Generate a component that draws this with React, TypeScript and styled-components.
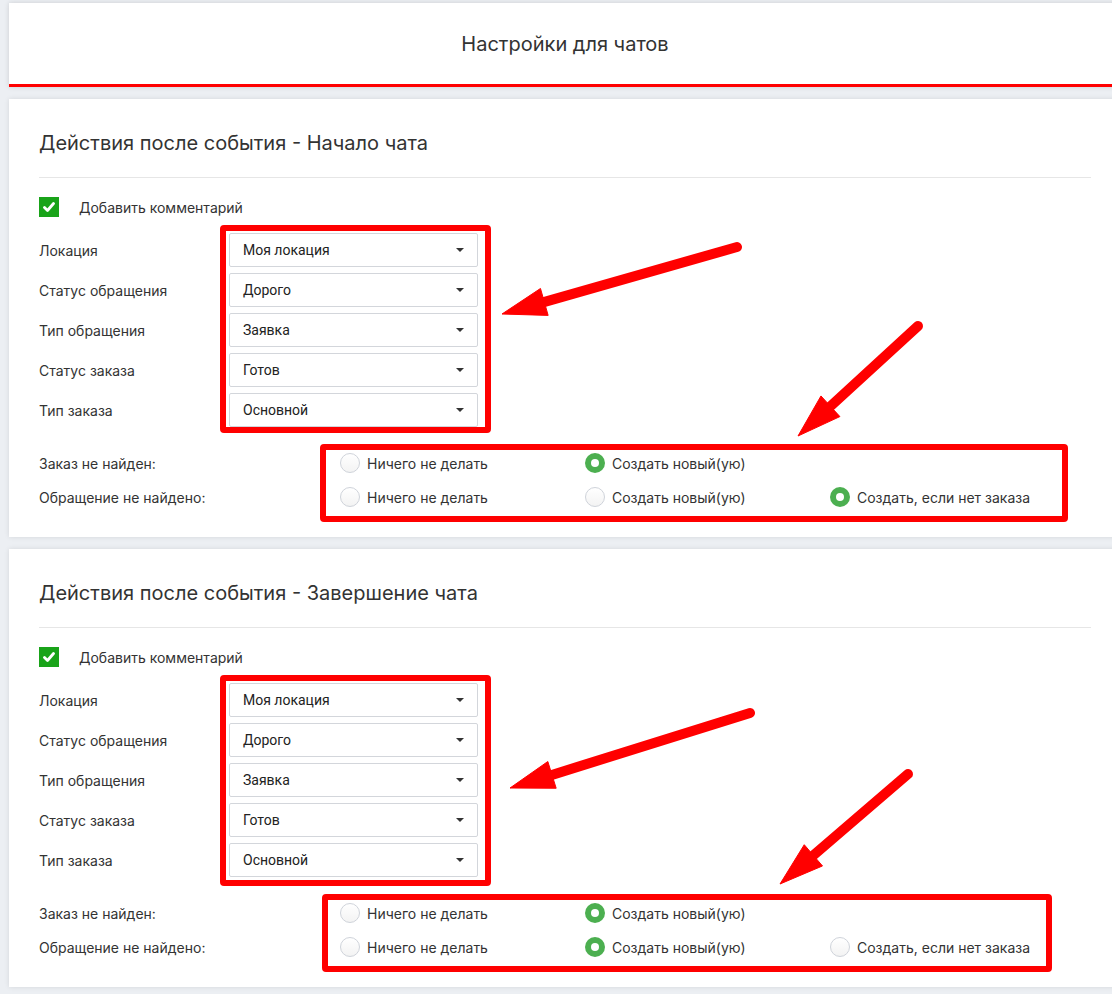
import React from "react";
import styled, { createGlobalStyle } from "styled-components";

const GlobalStyle = createGlobalStyle`
  body {
    margin: 0;
    background: #eceff3;
    font-family: Inter, "Noto Sans", sans-serif;
    color: #333;
    overflow-x: hidden;
  }
`;

const Page = styled.div`
  display: flex;
  flex-direction: column;
  gap: 12px;
  padding: 3px 0 5px 9px;
`;

const HeaderCard = styled.header`
  width: 1112px;
  height: 81px;
  background: #fff;
  border-bottom: 3px solid #ff0000;
  box-shadow: 0 0 5px rgba(0, 0, 0, 0.14);
  display: flex;
  align-items: center;
  justify-content: center;
  font-size: 20px;
  color: #333;
`;

const Card = styled.section`
  position: relative;
  width: 1112px;
  box-sizing: border-box;
  background: #fff;
  padding: 32px 30px 15px;
  box-shadow: 0 0 5px rgba(0, 0, 0, 0.1);
`;

const Title = styled.h2`
  margin: 0;
  font-size: 20px;
  font-weight: 400;
  line-height: 24px;
  padding-bottom: 22px;
  border-bottom: 1px solid #e6e6e6;
  color: #333;
`;

const CheckRow = styled.div`
  margin-top: 19px;
  display: flex;
  align-items: center;
  gap: 20px;
  height: 20px;
  font-size: 14px;
`;

const CheckBox = styled.span`
  width: 20px;
  height: 20px;
  background: #19a319;
  display: flex;
  align-items: center;
  justify-content: center;
`;

const Fields = styled.div`
  margin-top: 8px;
  display: flex;
`;

const LabelCol = styled.div<{ $width: number; $top: number; $gap: number; $row: number }>`
  width: ${(p) => p.$width}px;
  flex-shrink: 0;
  padding-top: ${(p) => p.$top}px;
  display: flex;
  flex-direction: column;
  gap: ${(p) => p.$gap}px;

  & > div {
    height: ${(p) => p.$row}px;
    display: flex;
    align-items: center;
    font-size: 14px;
  }
`;

const SelectBox = styled.div<{ $extra: number }>`
  border: 6px solid #ff0000;
  border-radius: 4px;
  padding: 2px 7px ${(p) => p.$extra}px 3px;
  display: flex;
  flex-direction: column;
  gap: 6px;
  width: 249px;
`;

const Select = styled.div`
  height: 34px;
  box-sizing: border-box;
  border: 1px solid #d3d6db;
  border-radius: 2px;
  padding: 0 13px;
  display: flex;
  align-items: center;
  justify-content: space-between;
  font-family: Roboto, "Noto Sans", sans-serif;
  font-size: 14px;
  color: #222;
  background: #fff;
`;

const Caret = styled.span`
  width: 0;
  height: 0;
  border-left: 4px solid transparent;
  border-right: 4px solid transparent;
  border-top: 4px solid #333;
`;

const RadioArea = styled.div<{ $top: number }>`
  margin-top: ${(p) => p.$top}px;
  display: flex;
`;

const RadioBox = styled.div<{ $width: number; $shift: number }>`
  margin-left: ${(p) => p.$shift}px;
  width: ${(p) => p.$width}px;
  box-sizing: border-box;
  border: 6px solid #ff0000;
  border-radius: 4px;
  padding: 0 0 6px ${(p) => 14 - p.$shift}px;
  display: flex;
  flex-direction: column;
  gap: 8px;
`;

const RadioRow = styled.div`
  height: 26px;
  display: flex;
  align-items: center;
`;

const Option = styled.label`
  width: 245px;
  flex-shrink: 0;
  display: flex;
  align-items: center;
  gap: 7px;
  font-size: 14px;
  color: #333;
  white-space: nowrap;
`;

const Radio = styled.span<{ $on: boolean }>`
  position: relative;
  flex-shrink: 0;
  width: 20px;
  height: 20px;
  box-sizing: border-box;
  border-radius: 50%;
  border: ${(p) => (p.$on ? "none" : "1px solid #cfd3da")};
  background: ${(p) => (p.$on ? "#4caf50" : "linear-gradient(#fff, #f3f3f3)")};

  &::after {
    content: "";
    display: ${(p) => (p.$on ? "block" : "none")};
    position: absolute;
    left: 6px;
    top: 6px;
    width: 8px;
    height: 8px;
    border-radius: 50%;
    background: #fff;
  }
`;

const Overlay = styled.svg`
  position: absolute;
  left: 0;
  top: 0;
  width: 100%;
  height: 100%;
  pointer-events: none;
  overflow: visible;
`;

type Pt = [number, number];

const Arrow = ({ from, to }: { from: Pt; to: Pt }) => {
  const dx = to[0] - from[0];
  const dy = to[1] - from[1];
  const len = Math.hypot(dx, dy);
  const ux = dx / len;
  const uy = dy / len;
  const head = 44;
  const half = 14;
  const bx = to[0] - ux * head;
  const by = to[1] - uy * head;
  const px = -uy * half;
  const py = ux * half;
  const pts = `${to[0]},${to[1]} ${bx + px},${by + py} ${bx - px},${by - py}`;
  return (
    <g fill="#ff0000" stroke="#ff0000">
      <line
        x1={from[0]}
        y1={from[1]}
        x2={bx + ux * 6}
        y2={by + uy * 6}
        strokeWidth={10}
        strokeLinecap="round"
      />
      <polygon points={pts} strokeWidth={1} strokeLinejoin="round" />
    </g>
  );
};

const fieldLabels = ["Локация", "Статус обращения", "Тип обращения", "Статус заказа", "Тип заказа"];
const fieldValues = ["Моя локация", "Дорого", "Заявка", "Готов", "Основной"];

type Section = {
  title: string;
  arrows: [Pt, Pt][];
  selectExtra: number;
  radioTop: number;
  radioWidth: number;
  radioShift: number;
  orderChecked: number;
  requestChecked: number;
};

const sections: Section[] = [
  {
    title: "Действия после события - Начало чата",
    arrows: [
      [[728, 148], [493, 215]],
      [[909, 227], [789, 337]],
    ],
    selectExtra: 0,
    radioTop: 11,
    radioWidth: 748,
    radioShift: 0,
    orderChecked: 1,
    requestChecked: 2,
  },
  {
    title: "Действия после события - Завершение чата",
    arrows: [
      [[741, 164], [501, 239]],
      [[899, 225], [771, 335]],
    ],
    selectExtra: 3,
    radioTop: 8,
    radioWidth: 730,
    radioShift: 2,
    orderChecked: 1,
    requestChecked: 1,
  },
];

const orderOptions = ["Ничего не делать", "Создать новый(ую)"];
const requestOptions = ["Ничего не делать", "Создать новый(ую)", "Создать, если нет заказа"];

const RadioLine = ({ options, checked }: { options: string[]; checked: number }) => (
  <RadioRow>
    {options.map((o, i) => (
      <Option key={o}>
        <Radio $on={i === checked} />
        {o}
      </Option>
    ))}
  </RadioRow>
);

const SettingsCard = ({ s }: { s: Section }) => (
  <Card>
    <Title>{s.title}</Title>
    <CheckRow>
      <CheckBox>
        <svg width="12" height="12" viewBox="0 0 12 12">
          <path d="M1.5 6.5 L4.5 9.5 L10.5 2.5" fill="none" stroke="#fff" strokeWidth="2.8" strokeLinecap="round" strokeLinejoin="round" />
        </svg>
      </CheckBox>
      Добавить комментарий
    </CheckRow>
    <Fields>
      <LabelCol $width={181} $top={8} $gap={6} $row={34}>
        {fieldLabels.map((l) => (
          <div key={l}>{l}</div>
        ))}
      </LabelCol>
      <SelectBox $extra={s.selectExtra}>
        {fieldValues.map((v) => (
          <Select key={v}>
            {v}
            <Caret />
          </Select>
        ))}
      </SelectBox>
    </Fields>
    <RadioArea $top={s.radioTop}>
      <LabelCol $width={281} $top={6} $gap={8} $row={26}>
        <div>Заказ не найден:</div>
        <div>Обращение не найдено:</div>
      </LabelCol>
      <RadioBox $width={s.radioWidth} $shift={s.radioShift}>
        <RadioLine options={orderOptions} checked={s.orderChecked} />
        <RadioLine options={requestOptions} checked={s.requestChecked} />
      </RadioBox>
    </RadioArea>
    <Overlay>
      {s.arrows.map(([a, b], i) => (
        <Arrow key={i} from={a} to={b} />
      ))}
    </Overlay>
  </Card>
);

export default function App() {
  return (
    <>
      <GlobalStyle />
      <Page>
        <HeaderCard>Настройки для чатов</HeaderCard>
        {sections.map((s) => (
          <SettingsCard key={s.title} s={s} />
        ))}
      </Page>
    </>
  );
}
